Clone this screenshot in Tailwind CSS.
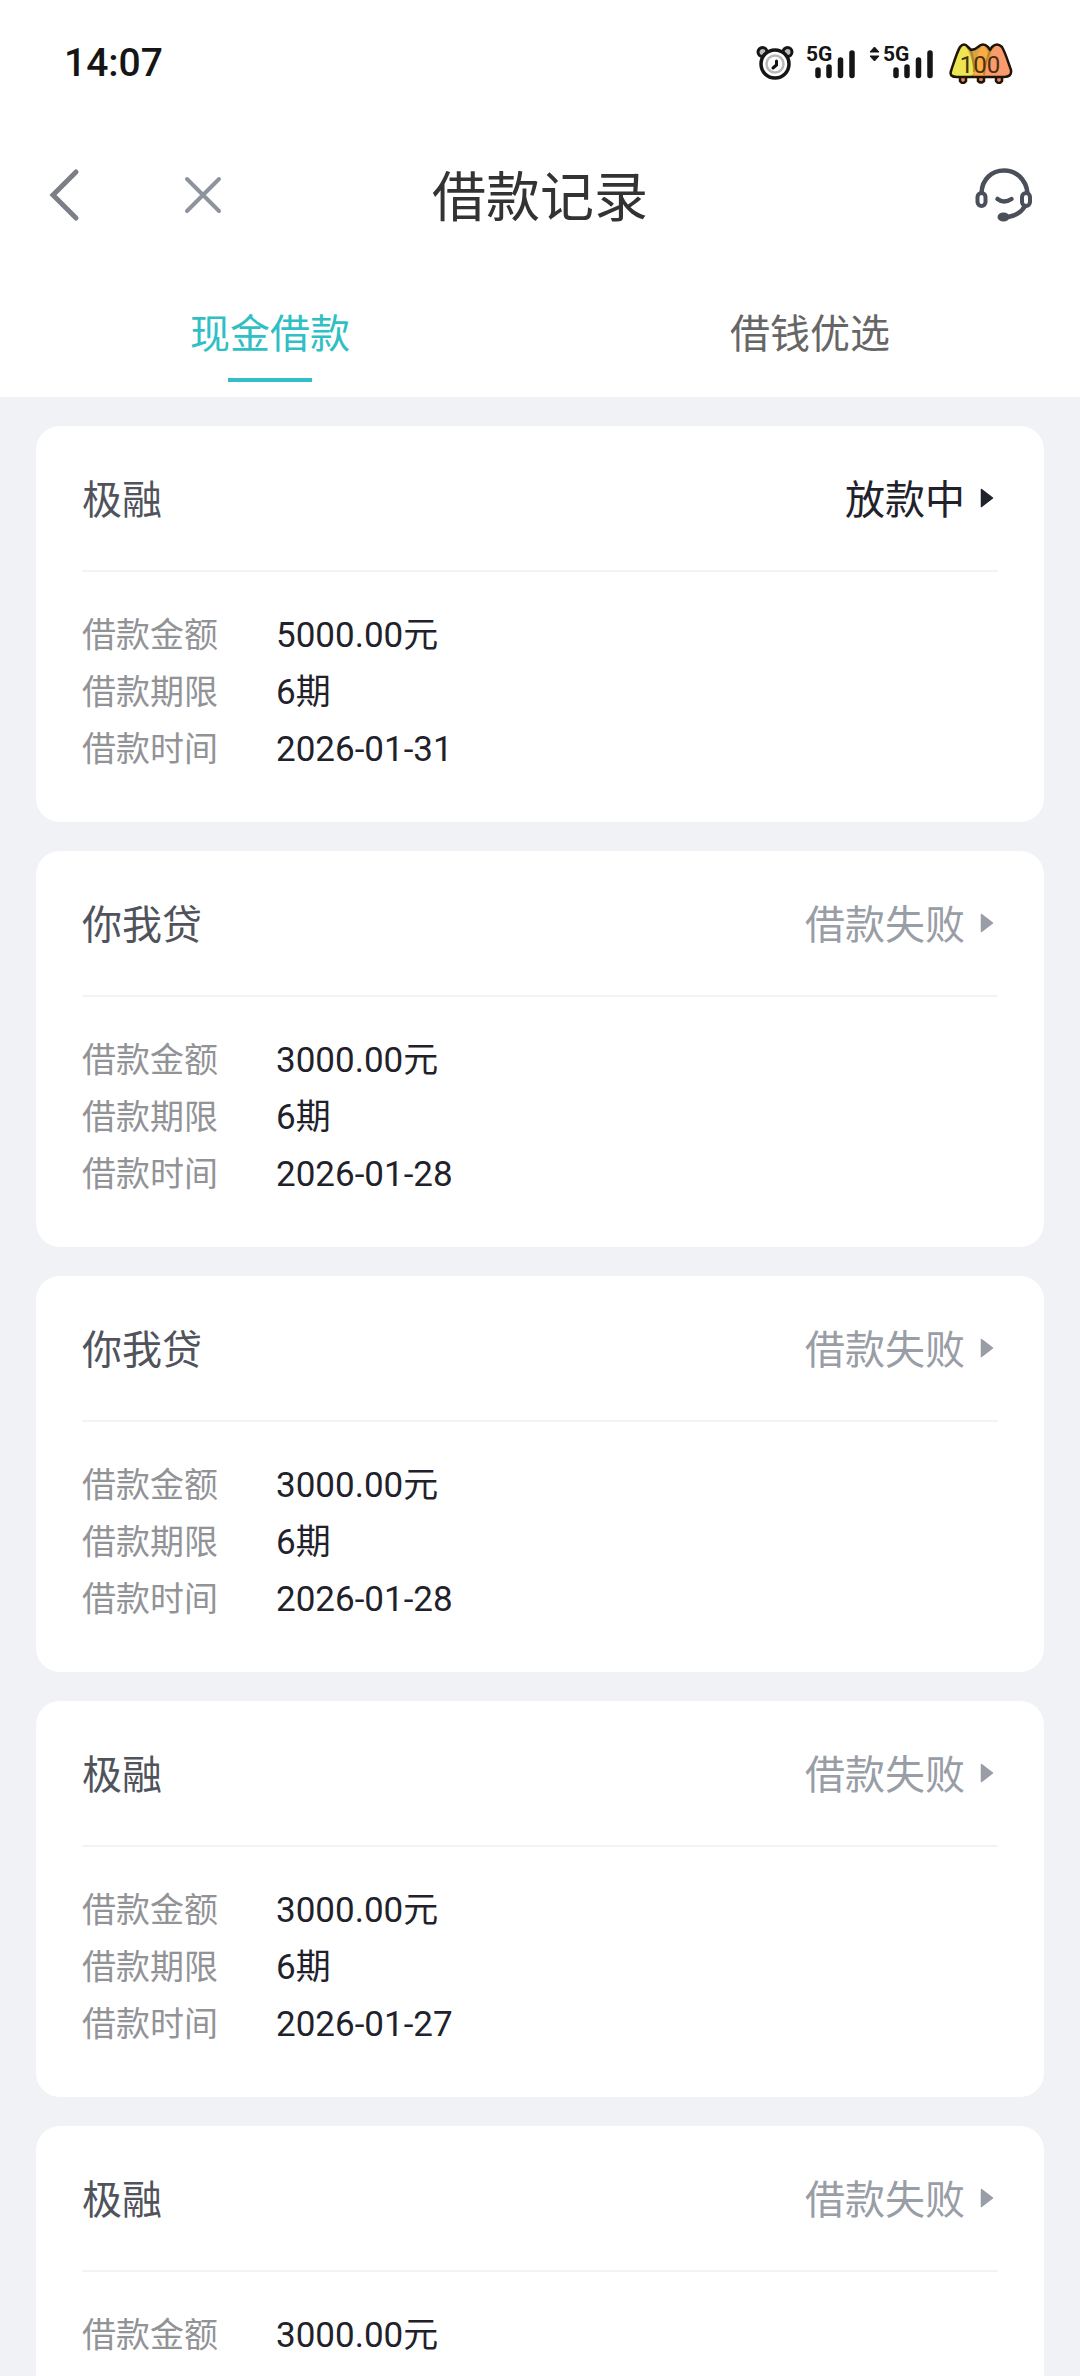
<!DOCTYPE html>
<html lang="zh-CN">
<head>
<meta charset="utf-8">
<meta name="viewport" content="width=device-width, initial-scale=1">
<title>借款记录</title>
<script src="https://cdn.jsdelivr.net/npm/@tailwindcss/browser@4"></script>
</head>
<body class="flex h-screen flex-col overflow-hidden bg-[#f0f2f6] font-[Roboto,'Noto_Sans_CJK_SC',sans-serif] text-[#1f222b]">
<svg class="hidden" aria-hidden="true">
  <symbol id="caret" viewBox="0 0 14 20"><path d="M1.5 1.5 12.5 10 1.5 18.5Z" fill="currentColor" stroke="currentColor" stroke-width="1.5" stroke-linejoin="round"/></symbol>
  <symbol id="bars" viewBox="0 0 40 30"><path d="M3 21v5.500M14 18v8.500M25.500 11v15.500M37 4v22.500" stroke="#151515" stroke-width="5.500" stroke-linecap="round"/></symbol>
</svg>

<header class="bg-white">
  <div class="flex h-[126px] items-center justify-between px-16">
    <time class="text-[39px] font-medium text-[#151515]">14:07</time>
    <div class="flex items-center">
      <svg class="h-10 w-10" viewBox="0 0 40 40" fill="none" aria-label="闹钟">
        <circle cx="6.500" cy="9" r="4.500" fill="#b9bcbd" stroke="#151515" stroke-width="3"/>
        <circle cx="31.500" cy="9" r="4.500" fill="#b9bcbd" stroke="#151515" stroke-width="3"/>
        <circle cx="19" cy="21" r="14" fill="#fff" stroke="#151515" stroke-width="3.500"/>
        <circle cx="19" cy="21" r="8.500" stroke="#b9b9b9" stroke-width="2.500"/>
        <path d="M20.500 18v4l-3.500 3" stroke="#151515" stroke-width="3" stroke-linecap="round"/>
      </svg>
      <svg class="ml-2 h-10 w-14" viewBox="0 0 56 40" aria-label="5G 信号">
        <text x="2" y="18" font-family="'Liberation Sans Narrow', Roboto, sans-serif" font-size="21" font-weight="700" fill="#151515">5G</text>
        <use href="#bars" x="11" y="6" width="40" height="30"/>
      </svg>
      <svg class="ml-2 h-10 w-[70px]" viewBox="0 0 70 40" aria-label="5G 数据信号">
        <path d="M2 9 6.500 4 11 9ZM2 13h9L6.500 18Z" fill="#151515" stroke="#151515" stroke-linejoin="round"/>
        <text x="15" y="18" font-family="'Liberation Sans Narrow', Roboto, sans-serif" font-size="21" font-weight="700" fill="#151515">5G</text>
        <use href="#bars" x="25" y="6" width="40" height="30"/>
      </svg>
      <svg class="ml-2 h-[42px] w-[70px]" viewBox="0 0 70 42" aria-label="电量 100">
        <path d="M14 35v4q3 4 6 0v-4M32 35v4q3 3 6 0v-4M50 35v4q3 4 6 0v-4" fill="#f08a60" stroke="#1e1408" stroke-width="2.500"/>
        <path d="M5 29C8 20 11 10 14 5Q18 0 22 5L25 8 29 7 32 5Q37 0 42 5L44 8 46 5Q51 0 56 5C60 12 62 20 65 28Q66 35 58 35H11Q3 35 5 29Z" fill="#d8a446"/>
        <path d="M28 35C29 20 32 8 37 3 42 8 44 20 45 35Z" fill="#fbad44"/>
        <path d="M38 35C41 22 45 8 51 3Q60 6 65 28 66 35 58 35Z" fill="#fb9a6c"/>
        <path d="M5 29Q11 8 18 3 24 8 28 28 28 35 20 35H11Q3 35 5 29Z" fill="#ebe652"/>
        <path d="M25 8Q28 20 28 30M44 9Q39 21 38 33" fill="none" stroke="#9a6a20" stroke-width="2" opacity=".6"/>
        <path d="M5 29C8 20 11 10 14 5Q18 0 22 5L25 8 29 7 32 5Q37 0 42 5L44 8 46 5Q51 0 56 5C60 12 62 20 65 28Q66 35 58 35H11Q3 35 5 29Z" fill="none" stroke="#1e1408" stroke-width="2.500" stroke-linejoin="round"/>
        <text x="34" y="31" text-anchor="middle" font-family="Roboto, sans-serif" font-size="24" fill="#4a3010">100</text>
      </svg>
    </div>
  </div>

  <div class="grid h-[138px] grid-cols-[1fr_auto_1fr] items-center px-11">
    <div class="flex items-center gap-[95px]">
      <button type="button" aria-label="返回" class="text-[#7c7f87]">
        <svg class="h-14 w-10" viewBox="0 0 40 56" fill="none" stroke="currentColor" stroke-width="5" stroke-linecap="round" stroke-linejoin="miter"><path d="M32 5 9 28l23 23"/></svg>
      </button>
      <button type="button" aria-label="关闭" class="text-[#8e949e]">
        <svg class="h-12 w-12" viewBox="0 0 48 48" fill="none" stroke="currentColor" stroke-width="4" stroke-linecap="round"><path d="M8 8l32 32M40 8 8 40"/></svg>
      </button>
    </div>
    <h1 class="pt-2 text-[54px] leading-[72px] text-[#333]">借款记录</h1>
    <button type="button" aria-label="客服" class="justify-self-end text-[#4a4f5a]">
      <svg class="h-[60px] w-[66px]" viewBox="0 0 66 60" fill="none" stroke="currentColor" stroke-width="4.500" stroke-linecap="round">
        <path d="M11.500 28C12 14 22 5.500 34 5.500S56 14 57.500 28"/>
        <rect x="7.500" y="28" width="8" height="13" rx="4" stroke-width="4"/>
        <rect x="52" y="28" width="8" height="13" rx="4" stroke-width="4"/>
        <path d="M27.500 34q6.500 5 14 0"/>
        <path d="M55 41q-5 9-17 11"/>
        <ellipse cx="33.500" cy="52" rx="6" ry="4.500" fill="currentColor" stroke="none"/>
      </svg>
    </button>
  </div>

  <nav class="grid grid-cols-2">
    <a href="#cash" aria-current="page" class="flex flex-col items-center gap-[15px] pt-[43px] pb-[15px] text-[#2fbfc4]">
      <span class="text-[40px] leading-14">现金借款</span>
      <span class="h-1 w-[84px] bg-[#2fbfc4]"></span>
    </a>
    <a href="#select" class="flex flex-col items-center pt-[43px] text-[#666]">
      <span class="text-[40px] leading-14">借钱优选</span>
    </a>
  </nav>
</header>

<main class="flex min-h-0 flex-1 flex-col gap-[29px] overflow-y-auto px-9 py-[29px] [scrollbar-width:none]">
  <article class="shrink-0 rounded-3xl bg-white px-[46px] pb-11">
    <div class="flex h-[146px] items-center justify-between border-b-2 border-[#f2f3f5] text-[40px]">
      <h2 class="pt-1.5 text-[#50535c]">极融</h2>
      <button type="button" class="flex items-center gap-[15px] pr-1"><span class="pt-1.5">放款中</span><svg class="h-5 w-3.5"><use href="#caret"/></svg></button>
    </div>
    <dl class="grid grid-cols-[136px_1fr] gap-x-[58px] pt-[35px] text-[34px] leading-[57px]">
      <dt class="text-[#929397]">借款金额</dt><dd class="text-[35px]">5000.00元</dd>
      <dt class="text-[#929397]">借款期限</dt><dd class="text-[35px]">6期</dd>
      <dt class="text-[#929397]">借款时间</dt><dd class="text-[35px]">2026-01-31</dd>
    </dl>
  </article>

  <article class="shrink-0 rounded-3xl bg-white px-[46px] pb-11">
    <div class="flex h-[146px] items-center justify-between border-b-2 border-[#f2f3f5] text-[40px]">
      <h2 class="pt-1.5 text-[#50535c]">你我贷</h2>
      <button type="button" class="flex items-center gap-[15px] pr-1 text-[#989da6]"><span class="pt-1.5">借款失败</span><svg class="h-5 w-3.5"><use href="#caret"/></svg></button>
    </div>
    <dl class="grid grid-cols-[136px_1fr] gap-x-[58px] pt-[35px] text-[34px] leading-[57px]">
      <dt class="text-[#929397]">借款金额</dt><dd class="text-[35px]">3000.00元</dd>
      <dt class="text-[#929397]">借款期限</dt><dd class="text-[35px]">6期</dd>
      <dt class="text-[#929397]">借款时间</dt><dd class="text-[35px]">2026-01-28</dd>
    </dl>
  </article>

  <article class="shrink-0 rounded-3xl bg-white px-[46px] pb-11">
    <div class="flex h-[146px] items-center justify-between border-b-2 border-[#f2f3f5] text-[40px]">
      <h2 class="pt-1.5 text-[#50535c]">你我贷</h2>
      <button type="button" class="flex items-center gap-[15px] pr-1 text-[#989da6]"><span class="pt-1.5">借款失败</span><svg class="h-5 w-3.5"><use href="#caret"/></svg></button>
    </div>
    <dl class="grid grid-cols-[136px_1fr] gap-x-[58px] pt-[35px] text-[34px] leading-[57px]">
      <dt class="text-[#929397]">借款金额</dt><dd class="text-[35px]">3000.00元</dd>
      <dt class="text-[#929397]">借款期限</dt><dd class="text-[35px]">6期</dd>
      <dt class="text-[#929397]">借款时间</dt><dd class="text-[35px]">2026-01-28</dd>
    </dl>
  </article>

  <article class="shrink-0 rounded-3xl bg-white px-[46px] pb-11">
    <div class="flex h-[146px] items-center justify-between border-b-2 border-[#f2f3f5] text-[40px]">
      <h2 class="pt-1.5 text-[#50535c]">极融</h2>
      <button type="button" class="flex items-center gap-[15px] pr-1 text-[#989da6]"><span class="pt-1.5">借款失败</span><svg class="h-5 w-3.5"><use href="#caret"/></svg></button>
    </div>
    <dl class="grid grid-cols-[136px_1fr] gap-x-[58px] pt-[35px] text-[34px] leading-[57px]">
      <dt class="text-[#929397]">借款金额</dt><dd class="text-[35px]">3000.00元</dd>
      <dt class="text-[#929397]">借款期限</dt><dd class="text-[35px]">6期</dd>
      <dt class="text-[#929397]">借款时间</dt><dd class="text-[35px]">2026-01-27</dd>
    </dl>
  </article>

  <article class="shrink-0 rounded-3xl bg-white px-[46px] pb-11">
    <div class="flex h-[146px] items-center justify-between border-b-2 border-[#f2f3f5] text-[40px]">
      <h2 class="pt-1.5 text-[#50535c]">极融</h2>
      <button type="button" class="flex items-center gap-[15px] pr-1 text-[#989da6]"><span class="pt-1.5">借款失败</span><svg class="h-5 w-3.5"><use href="#caret"/></svg></button>
    </div>
    <dl class="grid grid-cols-[136px_1fr] gap-x-[58px] pt-[35px] text-[34px] leading-[57px]">
      <dt class="text-[#929397]">借款金额</dt><dd class="text-[35px]">3000.00元</dd>
    </dl>
  </article>
</main>
</body>
</html>
